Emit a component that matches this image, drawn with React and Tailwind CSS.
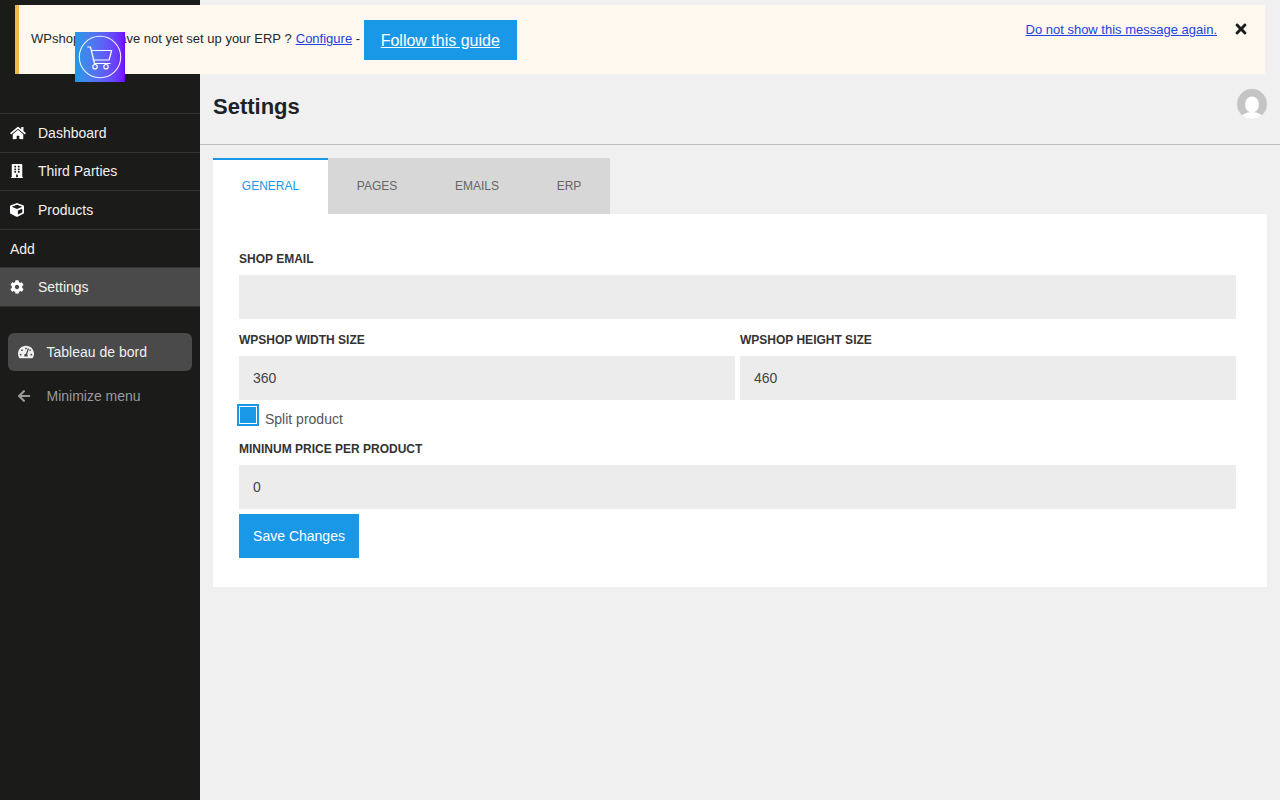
import React from 'react';
import { FaHome, FaBuilding, FaCube, FaCog, FaTachometerAlt, FaArrowLeft, FaTimes } from 'react-icons/fa';

const navItems = [
  { label: 'Dashboard', icon: FaHome, iconClass: 'mr-[12px] h-[14px] w-[16px]' },
  { label: 'Third Parties', icon: FaBuilding, iconClass: 'mr-[14px] h-[14px] w-[14px]' },
  { label: 'Products', icon: FaCube, iconClass: 'mr-[14px] h-[14px] w-[14px]' },
  { label: 'Add' },
  { label: 'Settings', icon: FaCog, iconClass: 'mr-[14px] h-[14px] w-[14px]', active: true },
];

const tabs = [
  { label: 'GENERAL', width: 'w-[115px]', active: true },
  { label: 'PAGES', width: 'w-[98px]' },
  { label: 'EMAILS', width: 'w-[102px]' },
  { label: 'ERP', width: 'w-[82px]' },
];

const Logo = () => (
  <div className="absolute left-[75px] top-[32px] z-20 h-[50px] w-[50px] bg-gradient-to-r from-[#1a9ae8] to-[#7000ff]">
    <svg width="50" height="50" viewBox="0 0 50 50" fill="none" stroke="white" strokeLinecap="round" strokeLinejoin="round">
      <circle cx="25" cy="25" r="20.700" strokeWidth="1.100" strokeOpacity="0.9" />
      <path strokeWidth="1.200" d="M12.700 15h2.800l4 16.500h15.500M16.300 18.500h20.400l-2.700 9.500h-15.800" />
      <circle cx="20" cy="34.700" r="2.200" strokeWidth="1.200" />
      <circle cx="31" cy="34.700" r="2.200" strokeWidth="1.200" />
    </svg>
  </div>
);

const Notice = () => (
  <div className="absolute left-[15px] top-[5px] z-10 flex h-[69px] w-[1250px] justify-between border-l-4 border-[#f0b849] bg-[#fff8ee] pl-3 pr-[18px]">
    <div className="flex h-[55px] items-start pt-[15px] text-[13px] leading-[38px] text-[#23282d]">
      <span className="whitespace-pre">WPshop: you have not yet set up your ERP ? </span>
      <a href="#" className="ml-[0.500px] text-[#2440e0] underline">Configure</a>
      <span className="whitespace-pre"> - </span>
      <a href="#" className="bg-[#1a98e8] px-[17px] pt-[1px] text-base leading-[39px] text-white underline">Follow this guide</a>
    </div>
    <div className="flex items-start gap-[18px] pt-[16px]">
      <a href="#" className="text-[13px] leading-[18px] text-[#2440e0] underline">Do not show this message again.</a>
      <FaTimes className="h-[16px] w-[12px] text-[#1c1c1c]" />
    </div>
  </div>
);

const Sidebar = () => (
  <aside className="flex w-[200px] shrink-0 flex-col bg-[#1b1b1a] pt-[113px] text-sm text-white">
    <nav className="border-t border-[#333]">
      {navItems.map((item) => {
        const Icon = item.icon;
        return (
          <a
            key={item.label}
            href="#"
            className={`flex h-[38.500px] items-center border-b border-[#333] pl-[10px] ${item.active ? 'bg-[#4a4a4a]' : ''} ${item.icon ? '' : 'pt-[1px]'}`}
          >
            {Icon && <Icon className={item.iconClass} />}
            <span className="text-[#f0f0f0]">{item.label}</span>
          </a>
        );
      })}
    </nav>
    <div className="mt-[26px] px-2">
      <a href="#" className="flex h-[38px] items-center rounded-md bg-[#4a4a4a] pl-[10px] text-[#f0f0f0]">
        <FaTachometerAlt className="mr-[12.500px] h-[16px] w-[16px]" />
        Tableau de bord
      </a>
      <a href="#" className="mt-[6px] flex h-[38px] items-center pl-[9px] text-[#999]">
        <FaArrowLeft className="mr-[15.500px] h-[14px] w-[14px]" />
        Minimize menu
      </a>
    </div>
  </aside>
);

const Field = ({ label, value, className = '' }) => (
  <div className={className}>
    <label className="block text-xs font-bold leading-[14px] text-[#333]">{label}</label>
    <input
      readOnly
      value={value}
      className="mt-[9px] block h-[44px] w-full bg-[#ececec] px-[14px] text-sm text-[#444] outline-none"
    />
  </div>
);

const SettingsForm = () => (
  <div className="w-[1054px] bg-white pb-[29px] pl-[26px] pr-[31px] pt-[38px]">
    <Field label="SHOP EMAIL" value="" />
    <div className="mt-[14px] flex gap-[5px]">
      <Field label="WPSHOP WIDTH SIZE" value="360" className="flex-1" />
      <Field label="WPSHOP HEIGHT SIZE" value="460" className="flex-1" />
    </div>
    <div className="mt-[4px] flex h-[22px] items-center">
      <span className="-ml-[2px] flex h-[22px] w-[22px] items-center justify-center border-2 border-[#1a98e8] p-[1px]">
        <span className="block h-full w-full bg-[#1a98e8]" />
      </span>
      <span className="ml-[6px] mt-[8px] text-sm text-[#555]">Split product</span>
    </div>
    <Field label="MININUM PRICE PER PRODUCT" value="0" className="mt-[16px]" />
    <button className="mt-[5px] block h-[44px] w-[120px] bg-[#1a98e8] text-sm text-white">Save Changes</button>
  </div>
);

export default function App() {
  return (
    <div className="relative flex min-h-[800px] bg-[#f0f0f0] font-['Liberation_Sans',sans-serif]">
      <Notice />
      <Logo />
      <Sidebar />
      <main className="flex-1 pt-[74px]">
        <header className="flex h-[71px] items-start justify-between border-b border-[#bdbdbd] px-[13px]">
          <h1 className="mt-[17px] text-[22px] leading-[32px] font-bold text-[#1d2327]">Settings</h1>
          <div className="mt-[15px] h-[30px] w-[30px] overflow-hidden rounded-full bg-[#c4c4c4]">
            <svg width="30" height="30" viewBox="0 0 30 30" fill="white">
              <ellipse cx="15" cy="15.500" rx="7" ry="8" />
              <ellipse cx="15" cy="31" rx="12" ry="8" />
            </svg>
          </div>
        </header>
        <div className="pl-[13px] pt-[13px]">
          <div className="flex">
            {tabs.map((tab) => (
              <button
                key={tab.label}
                className={`h-[56px] text-xs ${tab.width} ${tab.active ? 'border-t-2 border-[#1a98e8] bg-white pb-[2px] text-[#1a98e8]' : 'bg-[#d7d7d7] text-[#666]'}`}
              >
                {tab.label}
              </button>
            ))}
          </div>
          <SettingsForm />
        </div>
      </main>
    </div>
  );
}
